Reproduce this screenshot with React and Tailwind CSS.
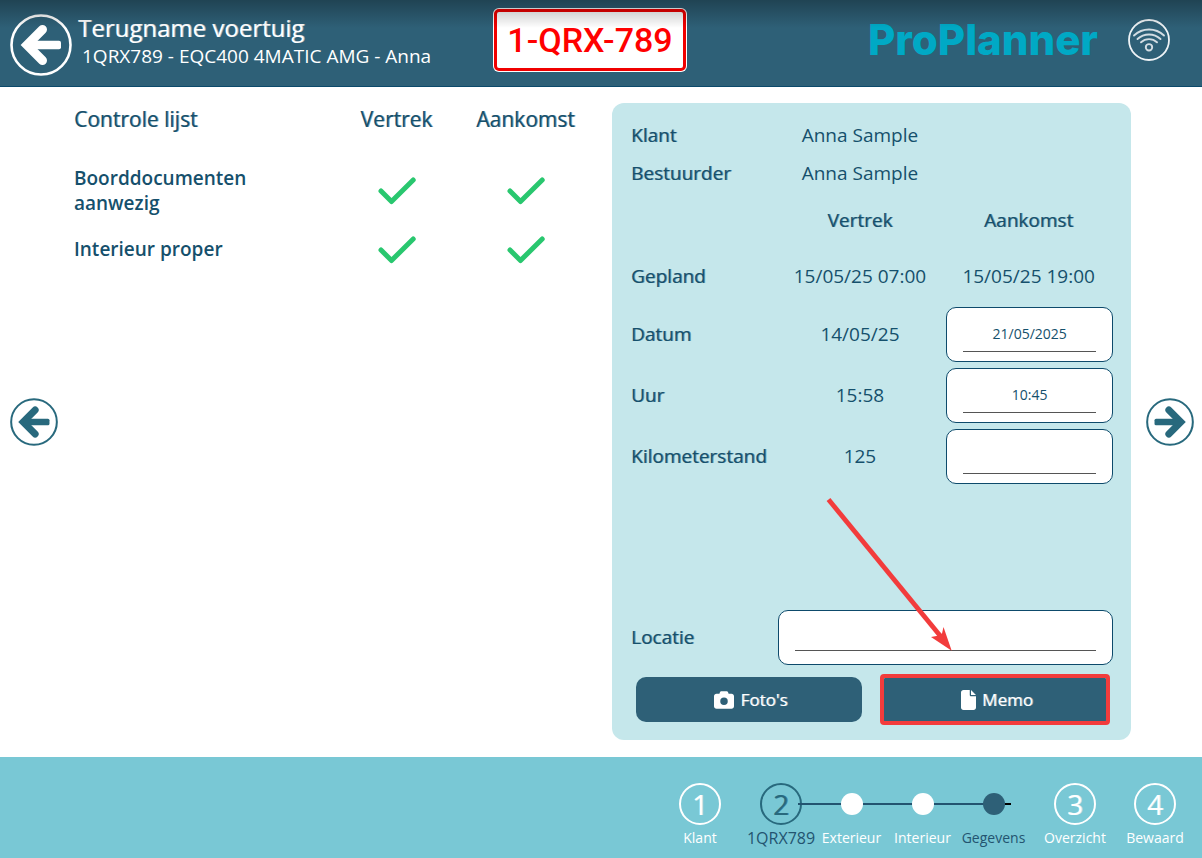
import React, { useState } from 'react';
import { FaCamera, FaFile } from 'react-icons/fa6';

const checklist = [
  { id: 'docs', label: 'Boorddocumenten aanwezig' },
  { id: 'interior', label: 'Interieur proper' },
];

// Halfvette look op basis van het gewone gewicht
const strong = 'font-normal [text-shadow:1px_0_0_rgb(21_80_108/0.55)]';
const strongWhite = 'font-normal [text-shadow:1px_0_0_rgb(255_255_255/0.55)]';

function CircleArrow({ flip = false, className = '' }) {
  return (
    <svg viewBox="0 0 62 62" fill="none" stroke="currentColor" className={`${className} ${flip ? '-scale-x-100' : ''}`}>
      <circle cx="31" cy="31" r="29.5" strokeWidth="2.6" />
      <path d="M32.5 15.5 17 31l15.5 15.5" strokeWidth="9" strokeLinecap="round" strokeLinejoin="miter" />
      <rect x="17" y="26.8" width="34" height="8.4" rx="2" fill="currentColor" stroke="none" />
    </svg>
  );
}

function WifiBadge() {
  return (
    <svg viewBox="0 0 42 42" fill="none" stroke="#eef3f6" className="w-[42px] h-[42px] shrink-0">
      <circle cx="21" cy="21" r="20" strokeWidth="1.8" />
      <g strokeWidth="1.9" strokeLinecap="round" stroke="#d3dde3">
        <path d="M6 16.500C14.500 8.500 27.500 8.500 36 16.500" />
        <path d="M9.500 20c6.500-6 16.500-6 23 0" />
        <path d="M13 23.300c4.500-4.200 11.500-4.200 16 0" />
        <circle cx="21" cy="28.300" r="3.200" />
      </g>
    </svg>
  );
}

function Check() {
  return (
    <svg viewBox="0 0 38 28" fill="none" stroke="#29c76f" strokeWidth="5" strokeLinecap="round" strokeLinejoin="round" className="w-[38px] h-7 mx-auto" role="img" aria-label="OK">
      <path d="M3 14l10.500 10.500L35.200 3" />
    </svg>
  );
}

function LineInput({ id, value, onChange, height = 'h-[37px]' }) {
  return (
    <div className="h-[55px] bg-white border border-[#0d4a6b] rounded-[10px] px-4 pt-[7px]">
      <input
        id={id}
        type="text"
        value={value}
        onChange={onChange}
        className={`block w-full ${height} border-b border-[#555] text-center text-sm outline-none`}
      />
    </div>
  );
}

function NumberStep({ nr, label, active, width = 'w-20', labelSize = 'text-sm' }) {
  return (
    <li className={`${width} flex flex-col items-center ${active ? 'text-[#28697d]' : 'text-white'}`}>
      <span className={`w-[42px] h-[42px] rounded-full border-2 flex items-center justify-center text-[28px] leading-none ${active ? strong : strongWhite}`}>{nr}</span>
      <span className={`mt-[1px] h-6 leading-6 whitespace-nowrap ${labelSize} ${active ? 'text-[#235470]' : ''}`}>{label}</span>
    </li>
  );
}

function DotStep({ label, active }) {
  return (
    <li className="w-[71px] flex flex-col items-center">
      <span className="h-[42px] flex items-center">
        <span className={`relative z-10 w-[22px] h-[22px] rounded-full ${active ? 'bg-[#2e6077]' : 'bg-white'}`} />
      </span>
      <span className={`mt-[1px] h-6 leading-6 text-sm ${active ? 'text-[#235470]' : 'text-white'}`}>{label}</span>
    </li>
  );
}

export default function App() {
  const [form, setForm] = useState({ datum: '21/05/2025', uur: '10:45', km: '', locatie: '' });
  const set = (key) => (e) => setForm({ ...form, [key]: e.target.value });

  const rows = [
    { key: 'datum', label: 'Datum', vertrek: '14/05/25' },
    { key: 'uur', label: 'Uur', vertrek: '15:58' },
    { key: 'km', label: 'Kilometerstand', vertrek: '125' },
  ];

  return (
    <div className="min-h-screen flex flex-col bg-white text-[#15506c] font-['Open_Sans',sans-serif]">

      {/* HEADER */}
      <header className="relative h-[87px] shrink-0 bg-[#2e6077] border-b border-[#0b4a6b] grid grid-cols-[1fr_auto_1fr] items-start pl-[10px] pr-8 text-white">
        <div className="flex">
          <button aria-label="Terug" className="mt-[14px] shrink-0">
            <CircleArrow className="w-[62px] h-[62px]" />
          </button>
          <div className="pt-3 pl-[6px] whitespace-nowrap">
            <h1 className={`text-2xl ${strongWhite}`}>Terugname voertuig</h1>
            <p className="pl-1 text-[19px] leading-6">1QRX789 - EQC400 4MATIC AMG - Anna</p>
          </div>
        </div>

        <div className="mt-2 w-[194px] h-16 rounded-md bg-white p-px">
          <div className="h-full rounded-[5px] border-3 border-[#f00000] flex items-center justify-center text-[#ff0000] text-[34px] leading-none font-medium font-[Roboto,sans-serif]">
            1-QRX-789
          </div>
        </div>

        <div className="flex items-center justify-end gap-[30px] pt-[19px]">
          <span className="text-[#00a9c5] text-[42px] leading-[42px] font-extrabold font-[Inter,sans-serif]">ProPlanner</span>
          <WifiBadge />
        </div>
        <div className="absolute inset-x-0 top-0 h-7 bg-linear-to-b from-black/30 to-transparent pointer-events-none" />
      </header>

      <main className="flex-1 flex items-center gap-[15px] pl-[10px] pr-2 pt-4 pb-[17px]">
        <button aria-label="Vorige" className="shrink-0 text-[#28697d]">
          <CircleArrow className="w-12 h-12" />
        </button>

        <div className="flex-1 self-stretch grid grid-cols-2 gap-[19px] pl-px">
          {/* CONTROLE LIJST */}
          <section className="pr-[3px]">
            <table className="w-full table-fixed">
              <thead>
                <tr className="h-[58px] align-top text-[21px] leading-8">
                  <th className={`w-1/2 text-left ${strong}`}>Controle lijst</th>
                  <th className={`w-1/4 ${strong}`}>Vertrek</th>
                  <th className={`w-1/4 ${strong}`}>Aankomst</th>
                </tr>
              </thead>
              <tbody>
                {checklist.map(item => (
                  <tr key={item.id} className="h-[59px]">
                    <th className="text-left text-[19px] leading-[25px] font-semibold pr-16">{item.label}</th>
                    <td><Check /></td>
                    <td><Check /></td>
                  </tr>
                ))}
              </tbody>
            </table>
          </section>

          {/* GEGEVENS */}
          <section className="relative flex flex-col rounded-xl bg-[#c5e7eb] pl-[19px] pr-[18px] pt-[13px] pb-[18px] text-[19px]">
            <table className="w-full table-fixed text-center">
              <tbody>
                <tr className="h-[38px]">
                  <th className={`w-[30%] text-left ${strong}`}>Klant</th>
                  <td className="w-[35%]">Anna Sample</td>
                  <td className="w-[35%]" />
                </tr>
                <tr className="h-[38px]">
                  <th className={`text-left ${strong}`}>Bestuurder</th>
                  <td>Anna Sample</td>
                  <td />
                </tr>
                <tr className="h-[57px]">
                  <td />
                  <th className={strong}>Vertrek</th>
                  <th className={strong}>Aankomst</th>
                </tr>
                <tr className="h-[55px] whitespace-nowrap">
                  <th className={`text-left ${strong}`}>Gepland</th>
                  <td>15/05/25 07:00</td>
                  <td>15/05/25 19:00</td>
                </tr>
                {rows.map(r => (
                  <tr key={r.key} className="h-[61px]">
                    <th className={`text-left ${strong}`}><label htmlFor={r.key}>{r.label}</label></th>
                    <td>{r.vertrek}</td>
                    <td className="pl-0.5"><LineInput id={r.key} value={form[r.key]} onChange={set(r.key)} /></td>
                  </tr>
                ))}
              </tbody>
            </table>

            <div className="mt-auto grid grid-cols-[30%_70%] items-center">
              <label htmlFor="locatie" className={strong}>Locatie</label>
              <div className="pl-0.5">
                <LineInput id="locatie" value={form.locatie} onChange={set('locatie')} height="h-[33px]" />
              </div>
            </div>

            <div className="mt-3 px-[5px] grid grid-cols-2 gap-5 text-white text-[17px]">
              <button className={`h-[45px] pl-1 rounded-[10px] bg-[#2e6077] flex items-center justify-center gap-[6px] ${strongWhite}`}>
                <FaCamera size={20} /> Foto's
              </button>
              <button className={`relative h-[45px] pl-1 rounded-md bg-[#2e6077] flex items-center justify-center gap-[6px] ${strongWhite}`}>
                <FaFile size={20} className="w-[15px]" /> Memo
                <span className="absolute -inset-x-[2px] -inset-y-[3px] rounded border-4 border-[#f23c3c]" />
              </button>
            </div>

            <svg viewBox="0 0 140 165" className="absolute right-[171px] bottom-[85px] w-[140px] h-[165px] pointer-events-none">
              <path d="M8.500 9.500 122 148" stroke="#f23c3c" strokeWidth="4.800" />
              <path d="M131.700 160.700 111 147 119 145.500 122 143.500 123.500 137Z" fill="#f23c3c" />
            </svg>
          </section>
        </div>

        <button aria-label="Volgende" className="shrink-0 text-[#28697d]">
          <CircleArrow flip className="w-12 h-12" />
        </button>
      </main>

      {/* STAPPEN */}
      <footer className="h-[101px] shrink-0 bg-[#79c8d5] pt-[26px] pr-[7px]">
        <ol className="flex justify-end">
          <NumberStep nr="1" label="Klant" />
          <li className="relative mx-[6px]">
            <span className="absolute left-[52px] right-[18px] top-5 h-[2px] bg-black" />
            <span className="absolute left-[52px] right-6 top-5 h-[2px] bg-[#235470]" />
            <ol className="flex">
              <NumberStep nr="2" label="1QRX789" active width="w-[70px]" labelSize="text-base" />
              <DotStep label="Exterieur" />
              <DotStep label="Interieur" />
              <DotStep label="Gegevens" active />
            </ol>
          </li>
          <NumberStep nr="3" label="Overzicht" />
          <NumberStep nr="4" label="Bewaard" />
        </ol>
      </footer>
    </div>
  );
}
